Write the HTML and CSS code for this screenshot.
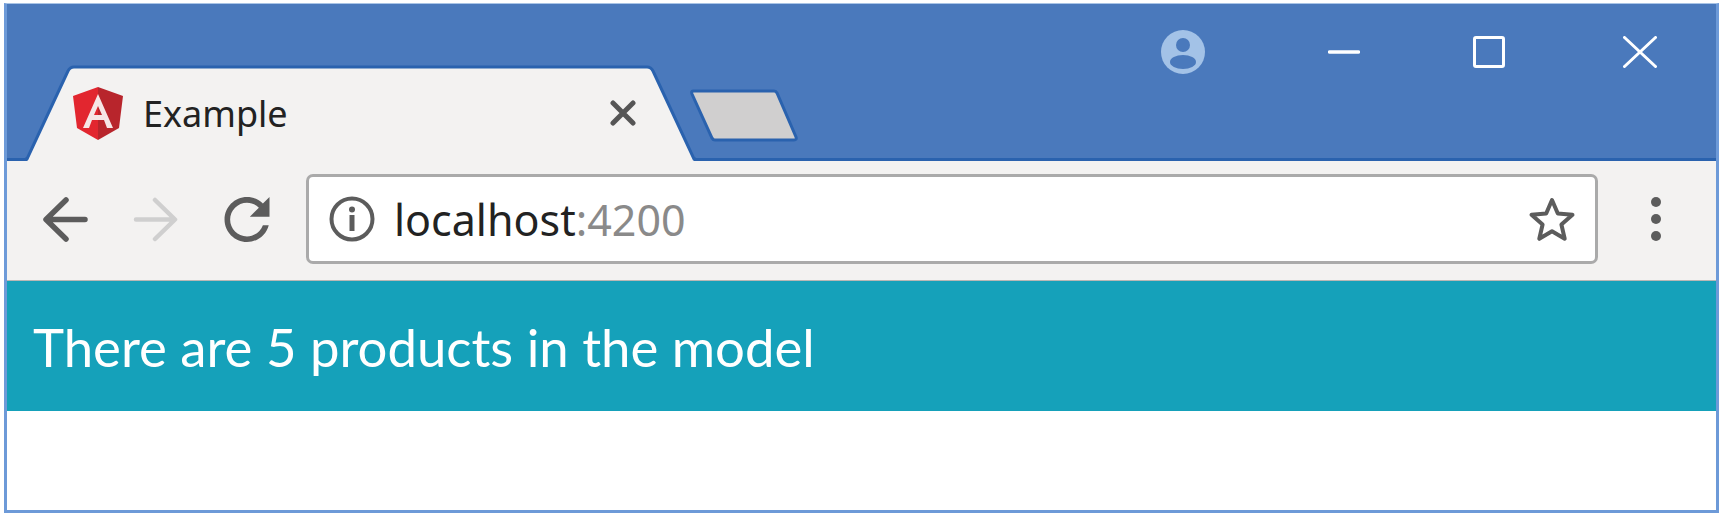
FILE: index.html

```html
<!DOCTYPE html>
<html lang="en">
<head>
  <meta charset="UTF-8">
  <title>Example</title>
  <link rel="stylesheet" href="styles.css">
</head>
<body>
  <div class="window">
    <header class="titlebar">
      <div class="tabs">
        <div class="tab">
          <svg class="tab-shape" viewBox="0 0 671 96">
            <path d="M2 96 L43 6 Q45 2 49 2 H622 Q626 2 628 6 L669 96 Z" fill="#f3f2f1"/>
            <path d="M0 94 H2 L43 6 Q45 2 49 2 H622 Q626 2 628 6 L669 94 H671" fill="none" stroke="#2a62ae" stroke-width="3"/>
          </svg>
          <svg class="favicon" viewBox="0 0 50 53">
            <path d="M25 0 L0 9 L4 41 L25 53 Z" fill="#e2262f"/>
            <path d="M25 0 L50 9 L46 41 L25 53 Z" fill="#b8252c"/>
            <path d="M25 7 L10 41 H16 L19 33 H31 L34 41 H40 Z M25 19 L29 28 H21 Z" fill="#f6e6e6" fill-rule="evenodd"/>
          </svg>
          <span class="tab-title">Example</span>
          <svg class="tab-close" viewBox="0 0 26 26">
            <path d="M3 3 L23 23 M23 3 L3 23" stroke="#555" stroke-width="5" stroke-linecap="round"/>
          </svg>
        </div>
        <svg class="new-tab" viewBox="0 0 110 55">
          <path d="M4 3 H85 Q87 3 88 5 L107 49 Q108 52 105 52 H26 Q24 52 23 50 L3 6 Q2 3 4 3 Z" fill="#d0cfcf" stroke="#2a62ae" stroke-width="3"/>
        </svg>
      </div>
      <div class="win-controls">
        <svg class="profile" viewBox="0 0 44 44">
          <circle cx="22" cy="22" r="22" fill="#a3c2e7"/>
          <circle cx="22" cy="15" r="7" fill="#4a79bc"/>
          <ellipse cx="22" cy="32" rx="13" ry="7" fill="#4a79bc"/>
        </svg>
        <svg class="win-min" viewBox="0 0 32 6">
          <path d="M1.500 3 H30.500" stroke="#fff" stroke-width="3.500" stroke-linecap="round"/>
        </svg>
        <svg class="win-max" viewBox="0 0 32 32">
          <rect x="1.500" y="1.500" width="29" height="29" rx="1.500" fill="none" stroke="#fff" stroke-width="3"/>
        </svg>
        <svg class="win-close" viewBox="0 0 34 32">
          <path d="M1.500 1.500 L32.500 30.500 M32.500 1.500 L1.500 30.500" stroke="#fff" stroke-width="3" stroke-linecap="round"/>
        </svg>
      </div>
    </header>

    <nav class="toolbar">
      <svg class="nav-icon" viewBox="0 0 46 45">
        <path d="M43 22.500 H6 M24 3 L4 22.500 L24 42" fill="none" stroke="#5c5c5c" stroke-width="5.500" stroke-linecap="round" stroke-linejoin="round"/>
      </svg>
      <svg class="nav-icon" viewBox="0 0 46 45">
        <path d="M3 22.500 H40 M22 3 L42 22.500 L22 42" fill="none" stroke="#cfcfcf" stroke-width="4.500" stroke-linecap="round" stroke-linejoin="round"/>
      </svg>
      <svg class="nav-icon" viewBox="4 4 16 16">
        <path d="M17.650 6.350C16.200 4.900 14.210 4 12 4c-4.420 0-7.990 3.580-7.990 8s3.570 8 7.990 8c3.730 0 6.840-2.550 7.730-6h-2.080c-.820 2.330-3.040 4-5.650 4-3.310 0-6-2.690-6-6s2.690-6 6-6c1.660 0 3.140.690 4.220 1.780L13 11h7V4l-2.350 2.350z" fill="#5c5c5c"/>
      </svg>
      <div class="omnibox">
        <svg class="info" viewBox="0 0 46 46">
          <circle cx="23" cy="23" r="20.500" fill="none" stroke="#5c5c5c" stroke-width="4"/>
          <circle cx="23" cy="13.500" r="3" fill="#5c5c5c"/>
          <rect x="20.500" y="19" width="5" height="16" fill="#5c5c5c"/>
        </svg>
        <span class="url">localhost<span class="url-port">:4200</span></span>
        <svg class="star" viewBox="0 0 48 46">
          <path d="M24 4 L29.800 17.500 L44.500 18.800 L33.400 28.500 L36.700 42.800 L24 35.300 L11.300 42.800 L14.600 28.500 L3.500 18.800 L18.200 17.500 Z" fill="none" stroke="#5c5c5c" stroke-width="4" stroke-linejoin="round"/>
        </svg>
      </div>
      <div class="menu-dots">
        <span></span><span></span><span></span>
      </div>
    </nav>

    <div class="content">
      <div class="banner">There are 5 products in the model</div>
    </div>
  </div>
</body>
</html>
```

FILE: styles.css

```css
body {
  margin: 0;
  background: #fff;
  font-family: "Noto Sans", sans-serif;
}
.window {
  margin: 3px 6px 0 4px;
  border: 3px solid #6d9ad8;
  border-top: 1px solid #a9c4e6;
}
.titlebar {
  display: flex;
  justify-content: space-between;
  height: 154px;
  background: #4a79bc;
  border-bottom: 3px solid #2a62ae;
}
.tabs {
  display: flex;
  align-items: flex-end;
  padding-left: 18px;
}
.tab {
  position: relative;
  display: flex;
  align-items: center;
  width: 671px;
  height: 96px;
  margin-bottom: -3px;
  padding: 0 60px 0 48px;
  box-sizing: border-box;
}
.tab-shape {
  position: absolute;
  top: 0;
  left: 0;
  width: 671px;
  height: 96px;
}
.favicon {
  position: relative;
  width: 50px;
  height: 53px;
}
.tab-title {
  position: relative;
  margin-left: 20px;
  font-size: 36px;
  color: #222;
}
.tab-close {
  position: relative;
  width: 26px;
  height: 26px;
  margin-left: auto;
}
.new-tab {
  width: 110px;
  height: 55px;
  margin: 0 0 15px -7px;
}
.win-controls {
  display: flex;
  align-items: center;
  align-self: flex-start;
  gap: 116px;
  margin-top: 26px;
  padding-right: 59px;
}
.profile {
  width: 44px;
  height: 44px;
}
.win-min {
  width: 32px;
  height: 6px;
  margin-left: 7px;
}
.win-max {
  width: 32px;
  height: 32px;
  margin-left: -3px;
}
.win-close {
  width: 34px;
  height: 32px;
  margin-left: 2px;
}
.toolbar {
  display: flex;
  align-items: center;
  gap: 45px;
  height: 116px;
  padding: 0 55px 3px 35px;
  background: #f3f2f1;
  border-bottom: 1px solid #b9b7b5;
}
.nav-icon {
  width: 46px;
  height: 45px;
}
.omnibox {
  display: flex;
  align-items: center;
  flex: 1;
  height: 90px;
  box-sizing: border-box;
  margin: 0 53px 0 -9px;
  padding: 0 19px 0 20px;
  background: #fff;
  border: 3px solid #aaa;
  border-radius: 7px;
}
.info {
  width: 46px;
  height: 46px;
}
.url {
  margin-left: 19px;
  font-size: 43px;
  color: #222;
}
.url-port {
  color: #8a8a8a;
}
.star {
  width: 48px;
  height: 46px;
  margin-left: auto;
}
.menu-dots {
  display: flex;
  flex-direction: column;
  gap: 7px;
  margin-left: -45px;
}
.menu-dots span {
  width: 10px;
  height: 10px;
  border-radius: 50%;
  background: #5c5c5c;
}
.content {
  height: 229px;
  background: #fff;
}
.banner {
  display: flex;
  align-items: center;
  height: 130px;
  padding-left: 26px;
  background: #15a1ba;
  color: #fff;
  font-family: "Lato", sans-serif;
  font-size: 52.700px;
}
```
